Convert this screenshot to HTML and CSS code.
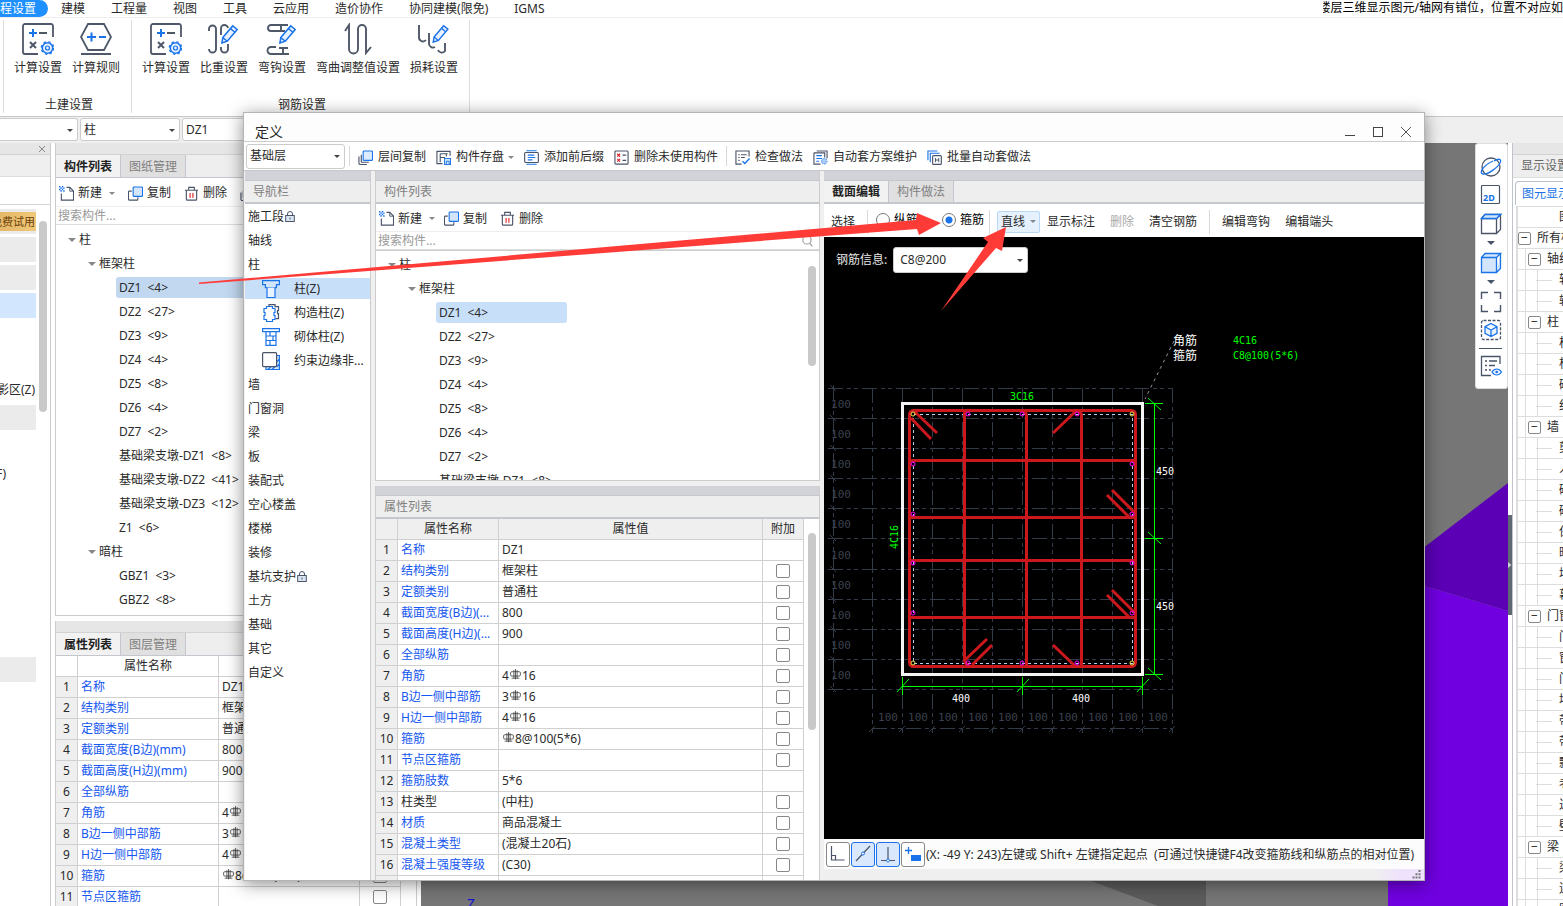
FILE: index.html
```
<!DOCTYPE html>
<html lang="zh-CN">
<head>
<meta charset="utf-8">
<title>定义</title>
<link rel="stylesheet" href="styles.css">
</head>
<body>
<svg class="defs" aria-hidden="true">
  <symbol id="i-new" viewBox="0 0 16 16"><path d="M8 1.500h3.500l4 4v9.500h-13V8" fill="none" stroke="#4a5468" stroke-width="1.200"/><path d="M11.500 1.500v4h4" fill="none" stroke="#4a5468"/><path d="M0 0h1.500v1.500H0zM3 0h1.500v1.500H3zM1.500 1.500H3V3H1.500zM4.500 1.500H6V3H4.500zM0 3h1.500v1.500H0zM3 3h1.500v1.500H3zM1.500 4.500H3V6H1.500zM4.500 4.500H6V6H4.500z" fill="#1a73e8"/></symbol>
  <symbol id="i-copy" viewBox="0 0 16 16"><path d="M4 5.500H1.500a1 1 0 0 0-1 1v7.500a1 1 0 0 0 1 1h8a1 1 0 0 0 1-1v-2" fill="none" stroke="#4a5468" stroke-width="1.200"/><rect x="5.500" y="1" width="10" height="10" rx="1" fill="#d3e5fb" stroke="#1a73e8" stroke-width="1.200"/></symbol>
  <symbol id="i-trash" viewBox="0 0 16 16"><path d="M1 4.500h14M5 4V1.500h6V4M2.500 4.500v9.500a1 1 0 0 0 1 1h9a1 1 0 0 0 1-1V4.500" fill="none" stroke="#4a5468" stroke-width="1.200"/><path d="M6.500 7.500v5M9.500 7.500v5" stroke="#e02020" stroke-width="1.200"/></symbol>
  <symbol id="i-layers" viewBox="0 0 16 16"><path d="M3.500 5v7a1 1 0 0 0 1 1h7M1 7v7a1.500 1.500 0 0 0 1.500 1.500h7" fill="none" stroke="#4a5468" stroke-width="1.200"/><rect x="5.500" y="1" width="10" height="10" rx="1" fill="#dcebfd" stroke="#1a73e8" stroke-width="1.200"/></symbol>
  <symbol id="i-store" viewBox="0 0 16 16"><path d="M15 6V1.500H1v13h6M4.500 4v9M4.500 8h5M11 4v3M4.500 4h8" fill="none" stroke="#4a5468" stroke-width="1.200"/><rect x="9" y="9" width="6.500" height="6.500" fill="#d3e5fb" stroke="#1a73e8"/><path d="M11 15v-3h3v3" fill="none" stroke="#1a73e8"/></symbol>
  <symbol id="i-affix" viewBox="0 0 16 16"><path d="M2.500 0.800h11M2.500 15.200h11M4 5.500h7M4 8h8M4 10.500h5" stroke="#1a73e8" stroke-width="1.200"/><rect x="0.700" y="2.700" width="14.600" height="10.600" rx="1" fill="none" stroke="#4a5468" stroke-width="1.200"/></symbol>
  <symbol id="i-unused" viewBox="0 0 16 16"><rect x="1" y="1" width="14" height="14" rx="1" fill="none" stroke="#4a5468" stroke-width="1.200"/><path d="M3.500 4l3 3M6.500 4l-3 3M3.500 9.500l3 3M6.500 9.500l-3 3" stroke="#e02020" stroke-width="1.200"/><path d="M9 5.500h4M9 11h4" stroke="#4a5468" stroke-width="1.200"/></symbol>
  <symbol id="i-check" viewBox="0 0 16 16"><path d="M15 7V1H1v14h6M3.500 5h1.500M6.500 5h6M3.500 8h1.500M6.500 8h4M3.500 11h1.500" fill="none" stroke="#4a5468" stroke-width="1.200"/><path d="M8 12l2.500 2.500L15.500 9" fill="none" stroke="#1a73e8" stroke-width="1.500"/></symbol>
  <symbol id="i-scheme" viewBox="0 0 16 16"><path d="M4 1h11v8M1 3h11.500v5M1 3v12h7" fill="none" stroke="#4a5468" stroke-width="1.200"/><path d="M3.500 6h6M3.500 9h6M3.500 12h3" stroke="#1a73e8" stroke-width="1.200"/><circle cx="12" cy="12" r="3" fill="#a9cdf8" stroke="#1a73e8" stroke-dasharray="1 1"/></symbol>
  <symbol id="i-batch" viewBox="0 0 16 16"><path d="M1 11V1h10M3.500 13V3.500h10" fill="none" stroke="#1a73e8" stroke-width="1.200"/><rect x="6" y="6" width="9.300" height="9.300" rx="1" fill="#fff" stroke="#4a5468" stroke-width="1.200"/><path d="M9 8.500v4.500M12.500 8.500v4.500M9 10.700h3.500" stroke="#4a5468"/></symbol>
  <symbol id="i-calc" viewBox="0 0 32 32"><path d="M31 14V3a2 2 0 0 0-2-2H3a2 2 0 0 0-2 2v26a2 2 0 0 0 2 2h13" fill="none" stroke="#4f5869" stroke-width="1.800"/><path d="M7 10h8M11 6v8" stroke="#1a73e8" stroke-width="2"/><path d="M17 10h8M8 19l6 6M14 19l-6 6" stroke="#4f5869" stroke-width="2"/><circle cx="25.500" cy="25" r="5.200" fill="#e8f2fe" stroke="#1a73e8" stroke-width="1.500"/><circle cx="25.500" cy="25" r="2" fill="none" stroke="#1a73e8" stroke-width="1.200"/><circle cx="25.500" cy="25" r="6.300" fill="none" stroke="#1a73e8" stroke-width="1.200" stroke-dasharray="2.500 2.450"/></symbol>
  <symbol id="i-rule" viewBox="0 0 32 32"><path d="M8 1h16l7 13-7 13H8L1 14z" fill="none" stroke="#4f5869" stroke-width="1.800"/><path d="M1 31h30" stroke="#4f5869" stroke-width="2"/><path d="M7 14h9M11.500 9.500v9M19 14h7" stroke="#1a73e8" stroke-width="2"/></symbol>
  <symbol id="i-pencil" viewBox="0 0 20 22"><path d="M2 15L13 2l5 4L7 19l-6 2z" fill="#e8f2fe" stroke="#1a73e8" stroke-width="1.700"/><path d="M10.500 5l5 4M2 15l5 4" stroke="#1a73e8" stroke-width="1.500"/></symbol>
  <symbol id="i-weight" viewBox="0 0 32 32"><path d="M1 8V6a3.500 3.500 0 0 1 7 0v20a3.500 3.500 0 0 1-7 0M13 12V6a3.500 3.500 0 0 1 7-1M20 21v5a3.500 3.500 0 0 1-7 0v-2" fill="none" stroke="#4f5869" stroke-width="1.900"/><use href="#i-pencil" x="13" y="1" width="18" height="20"/></symbol>
  <symbol id="i-hook" viewBox="0 0 32 32"><path d="M22 2H5a3 3 0 0 0-3 3 3 3 0 0 0 3 3h3M8 8h4M15 2v7M12 8h7M10 24H5a3.500 3.500 0 0 0 0 7h18M17 25v6M13 25h9" fill="none" stroke="#4f5869" stroke-width="1.900"/><use href="#i-pencil" x="13" y="1" width="18" height="20"/></symbol>
  <symbol id="i-bend" viewBox="0 0 32 32"><path d="M3 8l4-6v24a4.500 4.500 0 0 0 9 0V6a4 4 0 0 1 8 0v24l5-6" fill="none" stroke="#4f5869" stroke-width="1.900"/></symbol>
  <symbol id="i-loss" viewBox="0 0 32 32"><path d="M1 2v12a4 4 0 0 0 7 3M11 10v11a4 4 0 0 0 6 3M20 27a4 4 0 0 0 7 1v-8" fill="none" stroke="#4f5869" stroke-width="1.900"/><use href="#i-pencil" x="14" y="1" width="18" height="19"/></symbol>
  <symbol id="i-lock" viewBox="0 0 10 11"><rect x="0.700" y="4.500" width="8.600" height="6" fill="#dbe6f5" stroke="#4a5468"/><path d="M2.500 4V3a2.500 2.500 0 0 1 5 0v1M5 6.500v2" fill="none" stroke="#4a5468"/></symbol>
  <symbol id="i-rebar" viewBox="0 0 12 12"><path d="M1.500 3.500q0-1 1-1h7q1 0 1 1v2q0 1-1 1h-7q-1 0-1-1zM4.500 1v7.500M7.500 1v7.500M6 0v9.500M2.500 8.500h7" fill="none" stroke="#333" stroke-width="0.700"/></symbol>
  <symbol id="i-col" viewBox="0 0 18 18"><path d="M0.600 0.600h16.800v4h-3v3h-11v-3h-2.800z" fill="#d3e5fb" stroke="#1a73e8" stroke-width="1.200"/><path d="M5 7.500v10h8v-10" fill="#e9f3ff" stroke="#1a73e8" stroke-width="1.200"/></symbol>
  <symbol id="i-ccol" viewBox="0 0 18 18"><path d="M7 3V.700h6v2h3.500v4h-1v3h1v5h-3" fill="none" stroke="#4a5468" stroke-width="1.200"/><path d="M4.500 2.500h6v2H13v4h-1v3h1v4h-2.500v2h-6v-2H2v-4h1v-3H2v-4h2.500z" fill="#fff" stroke="#1a73e8" stroke-width="1.200"/></symbol>
  <symbol id="i-mcol" viewBox="0 0 18 18"><path d="M0.600 0.600h16.800v3H.600zM4 4v13.400h10V4M4 8h10M4 12.500h10M8 4v4M11 8v4.500M8 12.500v5" fill="none" stroke="#1a73e8" stroke-width="1.200"/></symbol>
  <symbol id="i-ecol" viewBox="0 0 18 18"><path d="M14 3.500h3.400v14H4v-3M14.500 15l3-3M10 17.500l3-3M14.500 10l3-3M6 17.500l3-3" fill="#d3e5fb" stroke="#1a73e8" stroke-width="1.200"/><rect x="0.600" y="0.600" width="14" height="14" rx="1" fill="#fff" stroke="#4a5468" stroke-width="1.200"/></symbol>
</svg>

<div class="app">
  <nav class="menubar">
    <a class="menu active" href="#">程设置</a><a class="menu" href="#">建模</a><a class="menu" href="#">工程量</a><a class="menu" href="#">视图</a><a class="menu" href="#">工具</a><a class="menu" href="#">云应用</a><a class="menu" href="#">造价协作</a><a class="menu" href="#">协同建模(限免)</a><a class="menu" href="#">IGMS</a>
    <p class="notice"><span>楼层三维显示图元/轴网有错位，位置不对应如</span></p>
  </nav>

  <section class="ribbon">
    <div class="group">
      <div class="tools">
        <button class="tool"><svg><use href="#i-calc"/></svg>计算设置</button>
        <button class="tool"><svg><use href="#i-rule"/></svg>计算规则</button>
      </div>
      <div class="caption">土建设置</div>
    </div>
    <div class="group">
      <div class="tools">
        <button class="tool"><svg><use href="#i-calc"/></svg>计算设置</button>
        <button class="tool"><svg><use href="#i-weight"/></svg>比重设置</button>
        <button class="tool"><svg><use href="#i-hook"/></svg>弯钩设置</button>
        <button class="tool"><svg><use href="#i-bend"/></svg>弯曲调整值设置</button>
        <button class="tool"><svg><use href="#i-loss"/></svg>损耗设置</button>
      </div>
      <div class="caption">钢筋设置</div>
    </div>
  </section>

  <div class="combobar">
    <span class="combo c1"><select aria-label="楼层"><option></option></select></span>
    <span class="combo c2"><select aria-label="构件类型"><option>柱</option></select></span>
    <span class="combo c3"><select aria-label="构件"><option>DZ1</option></select></span>
  </div>

  <main class="work">
    <aside class="modnav">
      <div class="strip"><button class="shut" aria-label="关闭"><svg viewBox="0 0 8 8"><path d="M1 1l6 6M7 1l-6 6" stroke="#888"/></svg></button></div>
      <div class="modhead"></div>
      <div class="modgap"></div>
      <div class="modbody">
        <div class="modlist">
          <a class="mod trial" href="#"><span>免费试用</span></a>
          <a class="mod" href="#"></a>
          <a class="mod" href="#"></a>
          <a class="mod on" href="#"></a>
          <div class="modsub first"><span>影区(Z)</span></div>
          <a class="mod" href="#"></a>
          <div class="modsub second"><span>F)</span></div>
          <a class="mod" href="#"></a>
        </div>
        <div class="bar modbar"></div>
      </div>
    </aside>

    <div class="side">
      <section class="panel listpanel">
        <div class="strip"></div>
        <div class="tabs"><button class="tab on">构件列表</button><button class="tab">图纸管理</button></div>
        <div class="actions">
          <button><svg><use href="#i-new"/></svg>新建<i class="caret"></i></button>
          <button><svg><use href="#i-copy"/></svg>复制</button>
          <button><svg><use href="#i-trash"/></svg>删除</button>
          <button aria-label="层间复制"><svg><use href="#i-layers"/></svg></button>
        </div>
        <input class="search" type="text" placeholder="搜索构件..." aria-label="搜索构件">
        <ul class="tree">
          <li class="l0"><i class="caret big"></i>柱</li>
          <li class="l1"><i class="caret big"></i>框架柱</li>
          <li class="l2 on">DZ1 <b>&lt;4&gt;</b></li>
          <li class="l2">DZ2 <b>&lt;27&gt;</b></li>
          <li class="l2">DZ3 <b>&lt;9&gt;</b></li>
          <li class="l2">DZ4 <b>&lt;4&gt;</b></li>
          <li class="l2">DZ5 <b>&lt;8&gt;</b></li>
          <li class="l2">DZ6 <b>&lt;4&gt;</b></li>
          <li class="l2">DZ7 <b>&lt;2&gt;</b></li>
          <li class="l2">基础梁支墩-DZ1 <b>&lt;8&gt;</b></li>
          <li class="l2">基础梁支墩-DZ2 <b>&lt;41&gt;</b></li>
          <li class="l2">基础梁支墩-DZ3 <b>&lt;12&gt;</b></li>
          <li class="l2">Z1 <b>&lt;6&gt;</b></li>
          <li class="l1"><i class="caret big"></i>暗柱</li>
          <li class="l2">GBZ1 <b>&lt;3&gt;</b></li>
          <li class="l2">GBZ2 <b>&lt;8&gt;</b></li>
        </ul>
      </section>
      <section class="panel proppanel">
        <div class="strip"></div>
        <div class="tabs"><button class="tab on">属性列表</button><button class="tab">图层管理</button></div>
        <table class="props outer">
          <colgroup><col class="n"><col class="k"><col class="v"><col class="a"></colgroup>
          <tr><th></th><th>属性名称</th><th></th><th></th></tr>
          <tr><td>1</td><td>名称</td><td>DZ1</td><td></td></tr>
          <tr><td>2</td><td>结构类别</td><td>框架柱</td><td><input type="checkbox" aria-label="附加 2"></td></tr>
          <tr><td>3</td><td>定额类别</td><td>普通柱</td><td><input type="checkbox" aria-label="附加 3"></td></tr>
          <tr><td>4</td><td>截面宽度(B边)(mm)</td><td>800</td><td><input type="checkbox" aria-label="附加 4"></td></tr>
          <tr><td>5</td><td>截面高度(H边)(mm)</td><td>900</td><td><input type="checkbox" aria-label="附加 5"></td></tr>
          <tr><td>6</td><td>全部纵筋</td><td></td><td><input type="checkbox" aria-label="附加 6"></td></tr>
          <tr><td>7</td><td>角筋</td><td>4<svg><use href="#i-rebar"/></svg>16</td><td><input type="checkbox" aria-label="附加 7"></td></tr>
          <tr><td>8</td><td>B边一侧中部筋</td><td>3<svg><use href="#i-rebar"/></svg>16</td><td><input type="checkbox" aria-label="附加 8"></td></tr>
          <tr><td>9</td><td>H边一侧中部筋</td><td>4<svg><use href="#i-rebar"/></svg>16</td><td><input type="checkbox" aria-label="附加 9"></td></tr>
          <tr><td>10</td><td>箍筋</td><td><svg><use href="#i-rebar"/></svg>8@100(5*6)</td><td><input type="checkbox" aria-label="附加 10"></td></tr>
          <tr><td>11</td><td>节点区箍筋</td><td></td><td><input type="checkbox" aria-label="附加 11"></td></tr>
        </table>
      </section>
    </div>

    <div class="view">
      <svg class="scene" viewBox="421 143 1087 763" preserveAspectRatio="xMaxYMin slice">
        <path d="M1062 870L1206 870V906H1158z" fill="#5c5c5c"/>
        <path d="M1388 575L1508 483V611L1388 575z" fill="#5b00b5"/>
        <path d="M1388 575L1508 611V906H1388z" fill="#7000e0"/>
        <text x="467" y="909" class="axis">Z</text>
      </svg>
      <div class="viewtools">
        <button aria-label="动态观察"><svg viewBox="0 0 22 22"><circle cx="11" cy="11" r="9" fill="none" stroke="#4a5468" stroke-width="1.300"/><path d="M14 5c5-3 8-2 6 2S8 19 3 18s1-9 10-13" fill="none" stroke="#1a73e8" stroke-width="1.300"/></svg></button>
        <button aria-label="二维"><svg viewBox="0 0 22 22"><rect x="1.500" y="1.500" width="18" height="18" rx="1" fill="none" stroke="#4a5468" stroke-width="1.200"/><text x="3" y="17" class="twod">2D</text></svg></button>
        <button aria-label="线框"><svg viewBox="0 0 22 22"><path d="M1.500 5.500h15v15h-15zM1.500 5.500L5 1.500h15.500l-4 4M20.500 1.500v15l-4 4" fill="#fff" stroke="#4a5468" stroke-width="1.300"/><path d="M1.500 5.500L5 1.500h15.500l-4 4z" fill="#d3e5fb" stroke="#1a73e8" stroke-width="1.300"/></svg></button>
        <i class="caret dark"></i>
        <button aria-label="实体"><svg viewBox="0 0 22 22"><path d="M1.500 5.500h15v15h-15zM1.500 5.500L5 1.500h15.500l-4 4M20.500 1.500v15l-4 4" fill="#d3e5fb" stroke="#1a73e8" stroke-width="1.300"/></svg></button>
        <i class="caret dark"></i>
        <button aria-label="全屏"><svg viewBox="0 0 22 22"><path d="M1.500 8V1.500H8M14 1.500h6.500V8M20.500 14v6.500H14M8 20.500H1.500V14" fill="none" stroke="#4a5468" stroke-width="1.400"/></svg></button>
        <button aria-label="局部三维"><svg viewBox="0 0 22 22"><rect x="1.500" y="1.500" width="19" height="19" rx="2" fill="none" stroke="#4a5468" stroke-width="1.300" stroke-dasharray="3 1.500"/><path d="M11 4.500l6 3.200v6.600l-6 3.200-6-3.200V7.700zM5 7.700l6 3.300 6-3.300M11 11v6.500" fill="#e8f2fe" stroke="#1a73e8" stroke-width="1.300"/></svg></button>
        <hr>
        <button aria-label="显示设置"><svg viewBox="0 0 22 22"><path d="M20 9V1.500H1.500v19H11M5 6h2M9 6h8M5 10.500h2M9 10.500h6M5 15h2M9 15h2" fill="none" stroke="#4a5468" stroke-width="1.300"/><path d="M12 17c2.500-4 7-4 9.500 0-2.500 4-7 4-9.500 0z" fill="#e8f2fe" stroke="#1a73e8" stroke-width="1.200"/><circle cx="16.700" cy="17" r="1.300" fill="#1a73e8"/></svg></button>
      </div>
    </div>

    <div class="splitter"><button aria-label="收起"><svg viewBox="0 0 4 8"><path d="M0 1l3.500 3L0 7z" fill="#ccc"/></svg></button></div>

    <aside class="display">
      <div class="strip"></div>
      <h2>显示设置</h2>
      <div class="dtabs"><button>图元显示</button></div>
      <div class="dgrid">
        <div class="dhead">图元</div>
        <ul>
          <li class="d0"><button>−</button>所有构件</li>
          <li class="d1"><button>−</button>轴线</li><li class="d2">轴网</li><li class="d2">辅助轴线</li>
          <li class="d1"><button>−</button>柱</li><li class="d2">柱</li><li class="d2">构造柱</li><li class="d2">砌体柱</li><li class="d2">约束边缘</li>
          <li class="d1"><button>−</button>墙</li><li class="d2">剪力墙</li><li class="d2">人防门框墙</li><li class="d2">砌体墙</li><li class="d2">砌体加筋</li><li class="d2">保温墙</li><li class="d2">暗梁</li><li class="d2">墙垛</li><li class="d2">幕墙</li>
          <li class="d1"><button>−</button>门窗洞</li><li class="d2">门</li><li class="d2">窗</li><li class="d2">门联窗</li><li class="d2">墙洞</li><li class="d2">带形窗</li><li class="d2">带形洞</li><li class="d2">飘窗</li><li class="d2">老虎窗</li><li class="d2">过梁</li><li class="d2">壁龛</li>
          <li class="d1"><button>−</button>梁</li><li class="d2">梁</li><li class="d2">连梁</li><li class="d2">圈梁</li>
        </ul>
      </div>
    </aside>
  </main>
</div>

<div class="dialog" role="dialog" aria-label="定义">
  <header class="titlebar">
    <h1>定义</h1>
    <button aria-label="最小化"><svg viewBox="0 0 12 12"><path d="M1 9.500h10" stroke="#444"/></svg></button>
    <button aria-label="最大化"><svg viewBox="0 0 12 12"><rect x="1.500" y="1.500" width="9" height="9" fill="none" stroke="#444"/></svg></button>
    <button aria-label="关闭"><svg viewBox="0 0 12 12"><path d="M1 1l10 10M11 1L1 11" stroke="#555"/></svg></button>
  </header>
  <div class="dtools">
    <span class="combo c4"><select aria-label="楼层"><option>基础层</option></select></span>
    <i class="sep"></i>
    <button><svg><use href="#i-layers"/></svg>层间复制</button>
    <button><svg><use href="#i-store"/></svg>构件存盘<i class="caret"></i></button>
    <button><svg><use href="#i-affix"/></svg>添加前后缀</button>
    <button><svg><use href="#i-unused"/></svg>删除未使用构件</button>
    <i class="sep"></i>
    <button><svg><use href="#i-check"/></svg>检查做法</button>
    <button><svg><use href="#i-scheme"/></svg>自动套方案维护</button>
    <button><svg><use href="#i-batch"/></svg>批量自动套做法</button>
  </div>
  <div class="dbody">
    <nav class="navcol">
      <div class="dstrip"></div>
      <h2>导航栏</h2>
      <ul>
        <li>施工段<svg class="lock"><use href="#i-lock"/></svg></li>
        <li>轴线</li>
        <li>柱</li>
        <li class="sub on"><svg><use href="#i-col"/></svg>柱(Z)</li>
        <li class="sub"><svg><use href="#i-ccol"/></svg>构造柱(Z)</li>
        <li class="sub"><svg><use href="#i-mcol"/></svg>砌体柱(Z)</li>
        <li class="sub"><svg><use href="#i-ecol"/></svg>约束边缘非...</li>
        <li>墙</li>
        <li>门窗洞</li>
        <li>梁</li>
        <li>板</li>
        <li>装配式</li>
        <li>空心楼盖</li>
        <li>楼梯</li>
        <li>装修</li>
        <li>基坑支护<svg class="lock"><use href="#i-lock"/></svg></li>
        <li>土方</li>
        <li>基础</li>
        <li>其它</li>
        <li>自定义</li>
      </ul>
    </nav>

    <div class="midcol">
      <section class="complist">
        <div class="dstrip"></div>
        <h2>构件列表</h2>
        <div class="actions">
          <button><svg><use href="#i-new"/></svg>新建<i class="caret"></i></button>
          <button><svg><use href="#i-copy"/></svg>复制</button>
          <button><svg><use href="#i-trash"/></svg>删除</button>
        </div>
        <label class="searchbox"><input class="search" type="text" placeholder="搜索构件..." aria-label="搜索构件"><svg viewBox="0 0 10 11"><circle cx="4.500" cy="4.500" r="3.800" fill="none" stroke="#999"/><path d="M7 7.500l2.500 3" stroke="#999"/></svg></label>
        <div class="treebox">
          <ul class="tree">
            <li class="l0"><i class="caret big"></i>柱</li>
            <li class="l1"><i class="caret big"></i>框架柱</li>
            <li class="l2 on">DZ1 <b>&lt;4&gt;</b></li>
            <li class="l2">DZ2 <b>&lt;27&gt;</b></li>
            <li class="l2">DZ3 <b>&lt;9&gt;</b></li>
            <li class="l2">DZ4 <b>&lt;4&gt;</b></li>
            <li class="l2">DZ5 <b>&lt;8&gt;</b></li>
            <li class="l2">DZ6 <b>&lt;4&gt;</b></li>
            <li class="l2">DZ7 <b>&lt;2&gt;</b></li>
            <li class="l2">基础梁支墩-DZ1 <b>&lt;8&gt;</b></li>
          </ul>
          <div class="bar treebar"></div>
        </div>
      </section>
      <section class="attrs">
        <div class="dstrip"></div>
        <h2>属性列表</h2>
        <div class="attrbox">
          <table class="props inner">
            <colgroup><col class="n"><col class="k"><col class="v"><col class="a"></colgroup>
            <tr><th></th><th>属性名称</th><th>属性值</th><th>附加</th></tr>
            <tr><td>1</td><td>名称</td><td>DZ1</td><td></td></tr>
            <tr><td>2</td><td>结构类别</td><td>框架柱</td><td><input type="checkbox" aria-label="附加 结构类别"></td></tr>
            <tr><td>3</td><td>定额类别</td><td>普通柱</td><td><input type="checkbox" aria-label="附加 定额类别"></td></tr>
            <tr><td>4</td><td>截面宽度(B边)(...</td><td>800</td><td><input type="checkbox" aria-label="附加 截面宽度"></td></tr>
            <tr><td>5</td><td>截面高度(H边)(...</td><td>900</td><td><input type="checkbox" aria-label="附加 截面高度"></td></tr>
            <tr><td>6</td><td>全部纵筋</td><td></td><td><input type="checkbox" aria-label="附加 全部纵筋"></td></tr>
            <tr><td>7</td><td>角筋</td><td>4<svg><use href="#i-rebar"/></svg>16</td><td><input type="checkbox" aria-label="附加 角筋"></td></tr>
            <tr><td>8</td><td>B边一侧中部筋</td><td>3<svg><use href="#i-rebar"/></svg>16</td><td><input type="checkbox" aria-label="附加 B边一侧中部筋"></td></tr>
            <tr><td>9</td><td>H边一侧中部筋</td><td>4<svg><use href="#i-rebar"/></svg>16</td><td><input type="checkbox" aria-label="附加 H边一侧中部筋"></td></tr>
            <tr><td>10</td><td>箍筋</td><td><svg><use href="#i-rebar"/></svg>8@100(5*6)</td><td><input type="checkbox" aria-label="附加 箍筋"></td></tr>
            <tr><td>11</td><td>节点区箍筋</td><td></td><td><input type="checkbox" aria-label="附加 节点区箍筋"></td></tr>
            <tr><td>12</td><td>箍筋肢数</td><td>5*6</td><td></td></tr>
            <tr><td>13</td><td class="plain">柱类型</td><td>(中柱)</td><td><input type="checkbox" aria-label="附加 柱类型"></td></tr>
            <tr><td>14</td><td>材质</td><td>商品混凝土</td><td><input type="checkbox" aria-label="附加 材质"></td></tr>
            <tr><td>15</td><td>混凝土类型</td><td>(混凝土20石)</td><td><input type="checkbox" aria-label="附加 混凝土类型"></td></tr>
            <tr><td>16</td><td>混凝土强度等级</td><td>(C30)</td><td><input type="checkbox" aria-label="附加 混凝土强度等级"></td></tr>
            <tr><td></td><td></td><td></td><td></td></tr>
          </table>
          <div class="bar attrbar"></div>
        </div>
      </section>
    </div>

    <section class="editcol">
      <div class="dstrip"></div>
      <div class="tabs"><button class="tab on">截面编辑</button><button class="tab">构件做法</button></div>
      <div class="etools">
        <button>选择</button>
        <i class="sep"></i>
        <label class="r1"><input type="radio" name="bar">纵筋</label>
        <label class="r2"><input type="radio" name="bar" checked>箍筋</label>
        <i class="sep"></i>
        <button class="line">直线<i class="caret"></i></button>
        <button>显示标注</button>
        <button disabled>删除</button>
        <button>清空钢筋</button>
        <i class="sep"></i>
        <button>编辑弯钩</button>
        <button>编辑端头</button>
      </div>
      <div class="canvas">
        <div class="info"><label for="rebar">钢筋信息:</label><span class="combo c5"><select id="rebar"><option>C8@200</option></select></span></div>
        <svg class="drawing" viewBox="824 280 600 559">
          <g class="grid">
            <path d="M828 388.500H1172M828 418.500H1172M828 448.500H1172M828 478.500H1172M828 508.500H1172M828 538.500H1172M828 569.500H1172M828 599.500H1172M828 629.500H1172M828 659.500H1172M828 689.500H1172M872 728.500H1172"/>
            <path d="M833.500 385V692M872.500 388V733M902.500 388V733M932.500 388V733M962.500 388V733M992.500 388V733M1022.500 388V733M1052.500 388V733M1082.500 388V733M1112.500 388V733M1142.500 388V733M1172.500 388V733"/>
            <path class="tick" d="M830 385l6 6m-6 24l6 6m-6 24l6 6m-6 24l6 6m-6 24l6 6m-6 24l6 6m-6 25l6 6m-6 24l6 6m-6 24l6 6m-6 24l6 6m-6 24l6 6M869 732l6-6m24 6l6-6m24 6l6-6m24 6l6-6m24 6l6-6m24 6l6-6m24 6l6-6m24 6l6-6m24 6l6-6m24 6l6-6m24 6l6-6"/>
          </g>
          <g class="dim">
            <text x="841" y="408">100</text><text x="841" y="438">100</text><text x="841" y="468">100</text><text x="841" y="498">100</text><text x="841" y="528">100</text><text x="841" y="559">100</text><text x="841" y="589">100</text><text x="841" y="619">100</text><text x="841" y="649">100</text><text x="841" y="679">100</text>
            <text x="888" y="721">100</text><text x="918" y="721">100</text><text x="948" y="721">100</text><text x="978" y="721">100</text><text x="1008" y="721">100</text><text x="1038" y="721">100</text><text x="1068" y="721">100</text><text x="1098" y="721">100</text><text x="1128" y="721">100</text><text x="1158" y="721">100</text>
          </g>
          <rect class="wall" x="902.500" y="403.500" width="240" height="271"/>
          <rect class="cover" x="913.500" y="414.500" width="219" height="249"/>
          <g class="stirrup">
            <rect x="909.500" y="410.500" width="226" height="256" rx="4"/>
            <path d="M964.500 411V660q0 3 4 6M1026.500 666V416q0-4-4-5M1081.500 666V416q0-4-4-5M910 460.500h225M910 517.500h225M910 560.500h225M910 617.500h225"/>
            <path d="M915 412l22 21M911 418l20 21M1076 411l-23 22M1112 490l22 22M1107 495l22 22M1112 590l22 22M1107 595l22 22M965 660l22-21M972 665l20-20M1053 645l22 21"/>
          </g>
          <g class="node"><circle cx="968" cy="414" r="2"/><circle cx="1022" cy="414" r="2"/><circle cx="1077" cy="414" r="2"/><circle cx="913" cy="464" r="2"/><circle cx="913" cy="514" r="2"/><circle cx="913" cy="563" r="2"/><circle cx="913" cy="613" r="2"/><circle cx="1132" cy="464" r="2"/><circle cx="1132" cy="514" r="2"/><circle cx="1132" cy="563" r="2"/><circle cx="1132" cy="613" r="2"/><circle cx="968" cy="663" r="2"/><circle cx="1022" cy="663" r="2"/><circle cx="1077" cy="663" r="2"/></g>
          <g class="corner"><circle cx="913" cy="414" r="2"/><circle cx="1132" cy="414" r="2"/><circle cx="913" cy="663" r="2"/><circle cx="1132" cy="663" r="2"/></g>
          <path class="green" d="M1154.500 403V674M1145 403.500h18M1145 538.500h18M1145 674.500h18M1148 398l13 12M1148 532l13 12M1148 668l13 12M902 686.500h241M902.500 677v18M1022.500 677v18M1142.500 677v18M897 692l12-13M1017 692l12-13M1137 692l12-13"/>
          <path class="leader" d="M1174 341L1145 399"/>
          <g class="gtext"><text x="1010" y="400">3C16</text><text transform="translate(898 549) rotate(-90)">4C16</text><text x="1233" y="344">4C16</text><text x="1233" y="359">C8@100(5*6)</text></g>
          <g class="wtext"><text x="1156" y="475">450</text><text x="1156" y="610">450</text><text x="952" y="702">400</text><text x="1072" y="702">400</text></g>
          <g class="name"><text x="1173" y="345">角筋</text><text x="1173" y="360">箍筋</text></g>
        </svg>
      </div>
      <div class="status">
        <button aria-label="正交"><svg viewBox="0 0 22 22"><path d="M4.500 3v14h13M4.500 12.500h4v4" fill="none" stroke="#4a5468" stroke-width="1.200"/></svg></button>
        <button class="on" aria-label="端点"><svg viewBox="0 0 22 22"><path d="M4 18L18 3" stroke="#4a5468" stroke-width="1.200"/><circle cx="11" cy="10.500" r="1.500" fill="#fff" stroke="#1a73e8"/></svg></button>
        <button class="on" aria-label="垂足"><svg viewBox="0 0 22 22"><path d="M11 4v12M4 17.500h14" stroke="#4a5468" stroke-width="1.200"/><circle cx="11" cy="17.500" r="1.500" fill="#fff" stroke="#1a73e8"/></svg></button>
        <button aria-label="动态输入"><svg viewBox="0 0 22 22"><path d="M3 7.500h7M6.500 4v7" stroke="#1a73e8" stroke-width="1.300"/><rect x="9" y="12" width="10" height="6" fill="#1a73e8"/></svg></button>
        <span>(X: -49 Y: 243)左键或 Shift+ 左键指定起点&nbsp; (可通过快捷键F4改变箍筋线和纵筋点的相对位置)</span>
      </div>
      <div class="foot"><svg viewBox="0 0 9 9"><path d="M6.500 0h2v2h-2zM3.500 3.300h2v2h-2zM6.500 3.300h2v2h-2zM.500 6.600h2v2h-2zM3.500 6.600h2v2h-2zM6.500 6.600h2v2h-2z" fill="#777"/></svg></div>
    </section>
  </div>
</div>

<svg class="marks" viewBox="0 0 1100 400" aria-hidden="true"><path d="M199 282.500L916 220 917 213 941 223 919 235 917 229 199 284z"/><path d="M941 311L988 242 983 238 1006 227 1002 251 996 248z"/></svg>
</body>
</html>
```
FILE: styles.css
```
* { box-sizing: border-box; }
html, body { height: 100%; }
body {
  margin: 0;
  overflow: hidden;
  position: relative;
  font: 12px/16px "Noto Sans", "Noto Sans CJK SC", sans-serif;
  color: #2a2a2a;
  background: #fff;
}
button, input, select { font: inherit; color: inherit; margin: 0; }
button { background: none; border: 0; padding: 0; white-space: nowrap; }
ul { list-style: none; margin: 0; padding: 0; }
h1, h2, p { margin: 0; font-weight: 400; font-size: 12px; }
a { color: inherit; text-decoration: none; }
.defs { position: absolute; width: 0; height: 0; }

.caret { display: inline-block; width: 0; height: 0; flex: none; border: 3px solid transparent; border-top: 3px solid #888; border-bottom: 0; }
.caret.big { border-width: 4px 4px 0; }
.caret.dark { border-width: 4px 4px 0; border-top-color: #4a5468; }
.sep { width: 1px; height: 20px; background: #d9d9d9; flex: none; }
.bar { width: 8px; border-radius: 4px; background: #c9c9c9; }

.app { height: 100%; display: flex; flex-direction: column; }

.menubar { display: flex; height: 18px; flex: none; border-bottom: 1px solid #eee; }
.menu { padding: 0 13px; line-height: 17px; white-space: nowrap; }
.menu.active { padding: 0 13px 0 0; width: 48px; color: #fff; background: #1e90ff; border-radius: 0 10px 10px 0; }
.notice { margin-left: auto; width: 240px; overflow: hidden; display: flex; justify-content: flex-end; white-space: nowrap; color: #000; }

.ribbon { display: flex; flex: none; height: 99px; padding: 2px 0 3px 3px; border-bottom: 1px solid #c8c8c8; }
.group { display: flex; flex-direction: column; justify-content: space-between; border-right: 1px solid #ddd; padding: 3px 11px 0 10px; }
.group:first-child { border-left: 1px solid #ddd; }
.tools { display: flex; gap: 10px; }
.tool { display: flex; flex-direction: column; align-items: center; gap: 5px; }
.tool svg { width: 32px; height: 32px; }
.caption { text-align: center; padding-left: 4px; }

.combobar { display: flex; flex: none; gap: 2px; height: 26px; padding: 1px 0 2px; background: #efefef; }
.combo { position: relative; display: block; }
.combo::after { content: ""; position: absolute; right: 5px; top: 50%; margin-top: -1px; border: 3px solid transparent; border-top-color: #444; border-bottom: 0; pointer-events: none; }
.combo select { appearance: none; width: 100%; height: 100%; padding: 0 3px; background: #fff; border: 1px solid #ccc; border-radius: 3px; }
.c1 { width: 78px; }
.c1 select { border-left: 0; border-radius: 0 3px 3px 0; }
.c2 { width: 100px; }
.c3 { width: 140px; }

.work { flex: 1; min-height: 0; display: flex; }
.strip { height: 12px; flex: none; background: #e6e6e6; border-bottom: 1px solid #d2d2d2; }

.modnav { width: 51px; flex: none; border-right: 1px solid #ccc; display: flex; flex-direction: column; }
.modnav .strip { display: flex; justify-content: flex-end; padding: 2px 3px; }
.shut { width: 9px; height: 8px; display: flex; }
.modhead { height: 22px; background: #efefef; border-bottom: 1px solid #ddd; }
.modgap { height: 28px; border-bottom: 1px solid #d6d6d6; }
.modbody { display: flex; gap: 3px; flex: 1; min-height: 0; padding-top: 4px; }
.modlist { width: 36px; overflow: hidden; }
.mod { display: flex; justify-content: flex-end; height: 25px; margin-bottom: 3px; background: #ebebeb; }
.mod.on { background: #d2e6fe; margin-bottom: 0; }
.mod.trial { padding: 3px 0; }
.mod.trial span { flex: none; padding-right: 1px; font-size: 11px; line-height: 19px; background: linear-gradient(90deg, #e0b464, #f0c878); color: #6b3f0a; white-space: nowrap; }
.modsub { display: flex; justify-content: flex-end; white-space: nowrap; padding-right: 1px; }
.modsub.first { height: 87px; padding-top: 64px; }
.modsub.second { height: 224px; padding: 33px 30px 0 0; }
.modbar { height: 191px; margin-top: 12px; }

.side { width: 362px; flex: none; margin: 0 4px; display: flex; flex-direction: column; gap: 5px; }
.panel { border: 1px solid #ccc; border-top: 0; }
.listpanel { flex: none; }
.listpanel .l2.on { background: #c2d8f0; }
.proppanel { flex: 1; min-height: 0; overflow: hidden; border-bottom: 0; }
.tabs { display: flex; height: 23px; flex: none; background: #eee; border-bottom: 1px solid #c4c7ce; }
.tab { width: 65px; flex: none; padding-top: 1px; border-right: 1px solid #c4c7ce; color: #808080; background: #e0e0e0; }
.tab.on { color: #222; font-weight: 700; background: #f2f2f2; }
.actions { display: flex; align-items: center; height: 28px; gap: 13px; padding: 2px 4px 0 3px; }
.actions button { display: flex; align-items: center; gap: 4px; }
.actions svg { width: 15px; height: 15px; }
.actions .caret { margin-left: 3px; }
.search { display: block; width: 100%; height: 19px; padding: 0 2px; border: 0; border-bottom: 1px solid #ddd; border-top: 1px solid #eee; outline: 0; background: #fff; }
.search::placeholder { color: #999; opacity: 1; }

.tree { padding: 4px 0 2px; }
.tree li { display: flex; align-items: center; gap: 3px; height: 21px; margin-bottom: 3px; white-space: pre; }
.tree b { font-weight: 400; }
.l0 { padding-left: 12px; }
.l1 { padding-left: 32px; }
.l2 { margin-left: 60px; padding-left: 3px; width: 131px; border-radius: 3px; }
.l2.on { background: #c8dff9; }

.props { table-layout: fixed; border-collapse: separate; border-spacing: 0; width: 100%; }
.props th, .props td { height: 21px; padding: 0 3px; border: 0 solid #d0d0d0; border-width: 0 1px 1px 0; font-weight: 400; line-height: 18px; white-space: nowrap; overflow: hidden; }
.props td:nth-child(2) { color: #1557f0; }
.props td.plain { color: #2a2a2a; }
.props td:first-child { background: #efefef; text-align: center; padding: 0; }
.props td:last-child { text-align: center; padding: 0; }
.props td svg { width: 13px; height: 13px; vertical-align: -2px; }
.props input { appearance: none; display: block; margin: 0 auto; width: 14px; height: 14px; border: 1px solid #888; border-radius: 2px; background: #fff; }
.outer { width: 345px; }
.outer .n, .inner .n { width: 22px; }
.outer .k { width: 141px; }
.outer .a, .inner .a { width: 41px; }
.inner { flex: 1; align-self: flex-start; }
.inner .k { width: 101px; }
.inner th { background: #efefef; }

.view { position: relative; flex: 1; min-width: 0; background: #767676; }
.scene { display: block; width: 100%; height: 100%; }
.axis { font-size: 14px; fill: #1414d8; }
.viewtools { position: absolute; top: 0; right: 0; width: 33px; height: 246px; padding: 12px 2px 11px 0; background: #fff; border: 1px solid #ddd; border-radius: 3px; display: flex; flex-direction: column; align-items: center; justify-content: space-between; }
.viewtools button, .viewtools svg { display: block; width: 22px; height: 22px; }
.viewtools hr { width: 23px; margin: 0; border: 0; border-top: 1px solid #4a5468; }
.twod { font-size: 9px; font-weight: 700; fill: #1a73e8; }

.splitter { width: 4px; flex: none; display: flex; flex-direction: column; padding-top: 372px; }
.splitter button { height: 100px; background: #5d6873; }
.splitter svg { display: block; width: 4px; height: 8px; }

.display { width: 51px; flex: none; overflow: hidden; white-space: nowrap; border-left: 1px solid #bfc3ca; }
.display h2 { height: 23px; padding: 0 8px; line-height: 22px; background: #eee; color: #666; border-bottom: 1px solid #ddd; }
.dtabs { height: 28px; padding: 3px 0 0 2px; }
.dtabs button { height: 24px; padding: 0 6px; border: 1px solid #b9bfc9; border-bottom: 0; border-radius: 4px 0 0 0; color: #1a73e8; }
.dgrid { margin-left: 3px; border-left: 2px solid #ddd; border-top: 1px solid #ddd; }
.dhead { height: 21px; padding-left: 41px; line-height: 20px; border-bottom: 1px solid #ddd; }
.dgrid li { display: flex; align-items: center; height: 21px; border-bottom: 1px solid #ddd; }
.dgrid li button { width: 13px; height: 13px; flex: none; line-height: 10px; border: 1px solid #888; border-radius: 2px; background: #fff; margin-right: 6px; }
.d1::before { content: ""; align-self: stretch; flex: none; width: 1px; margin: 0 2px 0 7px; background: #ddd; }
.d2::before { content: ""; align-self: stretch; width: 11px; margin-left: 7px; border: solid #ddd; border-width: 0 1px; flex: none; }
.d2 { background: linear-gradient(#ddd, #ddd) 18px 50% / 16px 1px no-repeat; text-indent: 21px; }

.dialog { position: absolute; left: 243px; top: 112px; right: 138px; bottom: 25px; display: flex; flex-direction: column; background: #f0f0f0; border: 1px solid #b4b4b4; box-shadow: 0 3px 16px rgba(0, 0, 0, .45); }
.titlebar { display: flex; align-items: center; gap: 16px; height: 29px; flex: none; padding: 9px 12px 0 11px; background: #fdfdfd; border-bottom: 1px solid #ccc; }
.titlebar h1 { flex: 1; font-size: 14px; }
.titlebar svg { display: block; width: 12px; height: 12px; }
.dtools { display: flex; align-items: center; height: 29px; flex: none; gap: 10px; padding: 0 2px; background: #fff; border-bottom: 1px solid #c4c7ce; }
.dtools .combo { width: 99px; height: 25px; }
.dtools .sep { margin: 0 -2px; }
.dtools .combo + .sep { margin: 0 -2px 0 -6px; }
.dtools button { display: flex; align-items: center; gap: 5px; padding-top: 2px; }
.dtools button svg { width: 15px; height: 15px; }
.dtools button .caret { margin-left: -1px; }
.dbody { flex: 1; min-height: 0; display: flex; gap: 4px; padding-left: 1px; }
.dstrip { height: 10px; flex: none; background: #d2d3d9; border-bottom: 1px solid #c4c7ce; }
.dbody h2 { height: 23px; flex: none; padding: 0 8px; line-height: 21px; background: #eee; color: #808080; border-bottom: 2px solid #c4c7ce; }

.navcol { width: 126px; flex: none; display: flex; flex-direction: column; background: #fff; border-right: 1px solid #ccc; }
.navcol li { display: flex; align-items: center; height: 21px; margin: 2px 0 3px; padding-left: 3px; }
.navcol li + li { margin-top: 0; }
.navcol .sub { padding-left: 17px; gap: 14px; white-space: nowrap; }
.navcol .sub.on { background: #c8dff9; }
.navcol svg { width: 18px; height: 18px; flex: none; }
.navcol .lock { width: 10px; height: 11px; margin-left: 1px; }

.midcol { width: 445px; flex: none; display: flex; flex-direction: column; gap: 5px; }
.complist { flex: none; height: 310px; display: flex; flex-direction: column; border: 1px solid #ccc; border-top: 0; background: #fff; }
.complist .actions { height: 27px; flex: none; }
.complist .actions button:first-child { margin-right: -4px; }
.searchbox { position: relative; display: block; border-bottom: 1px solid #ccc; }
.searchbox svg { position: absolute; right: 6px; top: 4px; width: 11px; height: 12px; }
.treebox { display: flex; justify-content: space-between; flex: 1; min-height: 0; overflow: hidden; }
.treebox .tree { padding-top: 3px; }
.treebar { height: 100px; margin: 15px 3px 0 0; }
.attrs { flex: 1; min-height: 0; display: flex; flex-direction: column; border: 1px solid #ccc; border-width: 0 1px; background: #fff; }
.attrbox { display: flex; gap: 4px; flex: 1; min-height: 0; overflow: hidden; padding-right: 3px; }
.attrbar { height: 197px; margin-top: 14px; }
.inner th, .inner td { line-height: 20px; }

.editcol { flex: 1; min-width: 0; display: flex; flex-direction: column; background: #fff; }
.editcol .tabs { border-bottom-width: 2px; }
.etools { display: flex; align-items: center; height: 33px; flex: none; gap: 15px; padding: 2px 7px 0; white-space: nowrap; }
.etools .sep { margin: 0 -3px; height: 24px; }
.etools label { display: flex; align-items: center; gap: 4px; padding-bottom: 4px; color: #000; }
.etools .r1 { margin-left: -4px; }
.etools .r2 { margin-left: 9px; margin-right: -7px; }
.etools input { appearance: none; width: 14px; height: 14px; border: 1px solid #777; border-radius: 50%; background: #fff; }
.etools input:checked { background: radial-gradient(#1a73e8 3px, #fff 4px); }
.etools .line { display: flex; align-items: center; gap: 5px; height: 22px; padding: 0 3px; margin: 0 -8px 0 -5px; background: #e5f1fc; border: 1px solid #b8d8f5; border-radius: 2px; }
.etools button:disabled { color: #aaa; }
.canvas { flex: 1; min-height: 0; overflow: hidden; background: #000; }
.info { display: flex; align-items: center; gap: 6px; height: 43px; padding: 2px 12px 0; color: #e6e6e6; }
.c5 { width: 135px; height: 26px; color: #2a2a2a; }
.c5 select { padding: 0 6px; }
.drawing { display: block; width: 600px; height: 559px; }
.drawing path, .drawing rect, .drawing circle { fill: none; }
.grid { stroke: #333a48; stroke-dasharray: 15 4 4 3 4 4; shape-rendering: crispEdges; }
.tick { stroke-dasharray: none; }
.dim { font: 11px "DejaVu Sans Mono", monospace; fill: #3b424f; text-anchor: middle; }
.wall { stroke: #f4f4f4; stroke-width: 3; }
.cover { stroke: #b4d2f0; stroke-dasharray: 3 3; shape-rendering: crispEdges; }
.stirrup { stroke: #cb181d; stroke-width: 3; }
.node { stroke: #f0f; }
.corner { stroke: #f5e050; }
.green { stroke: #0f0; }
.leader { stroke: #999; stroke-dasharray: 3 4; }
.gtext, .wtext { font: 10px "DejaVu Sans Mono", monospace; fill: #0f0; }
.wtext { fill: #fff; }
.name { fill: #fff; }
.status { display: flex; align-items: center; height: 30px; flex: none; gap: 1px; padding: 0 0 0 2px; overflow: hidden; white-space: nowrap; background: #fcfcfc; }
.status span { padding-top: 2px; }
.status button { width: 24px; height: 25px; flex: none; border: 1px solid #888; border-radius: 3px; background: #fff; }
.status button.on { background: #d9e8fc; border-color: #1a73e8; }
.status svg { display: block; width: 22px; height: 22px; }
.foot { display: flex; justify-content: flex-end; align-items: center; height: 11px; flex: none; padding-right: 3px; background: linear-gradient(90deg, #efefef 92%, #efe2fd 96%); }
.foot svg { width: 9px; height: 9px; }

.marks { position: absolute; left: 0; top: 0; width: 1100px; height: 400px; pointer-events: none; fill: #ff3b37; }
```
